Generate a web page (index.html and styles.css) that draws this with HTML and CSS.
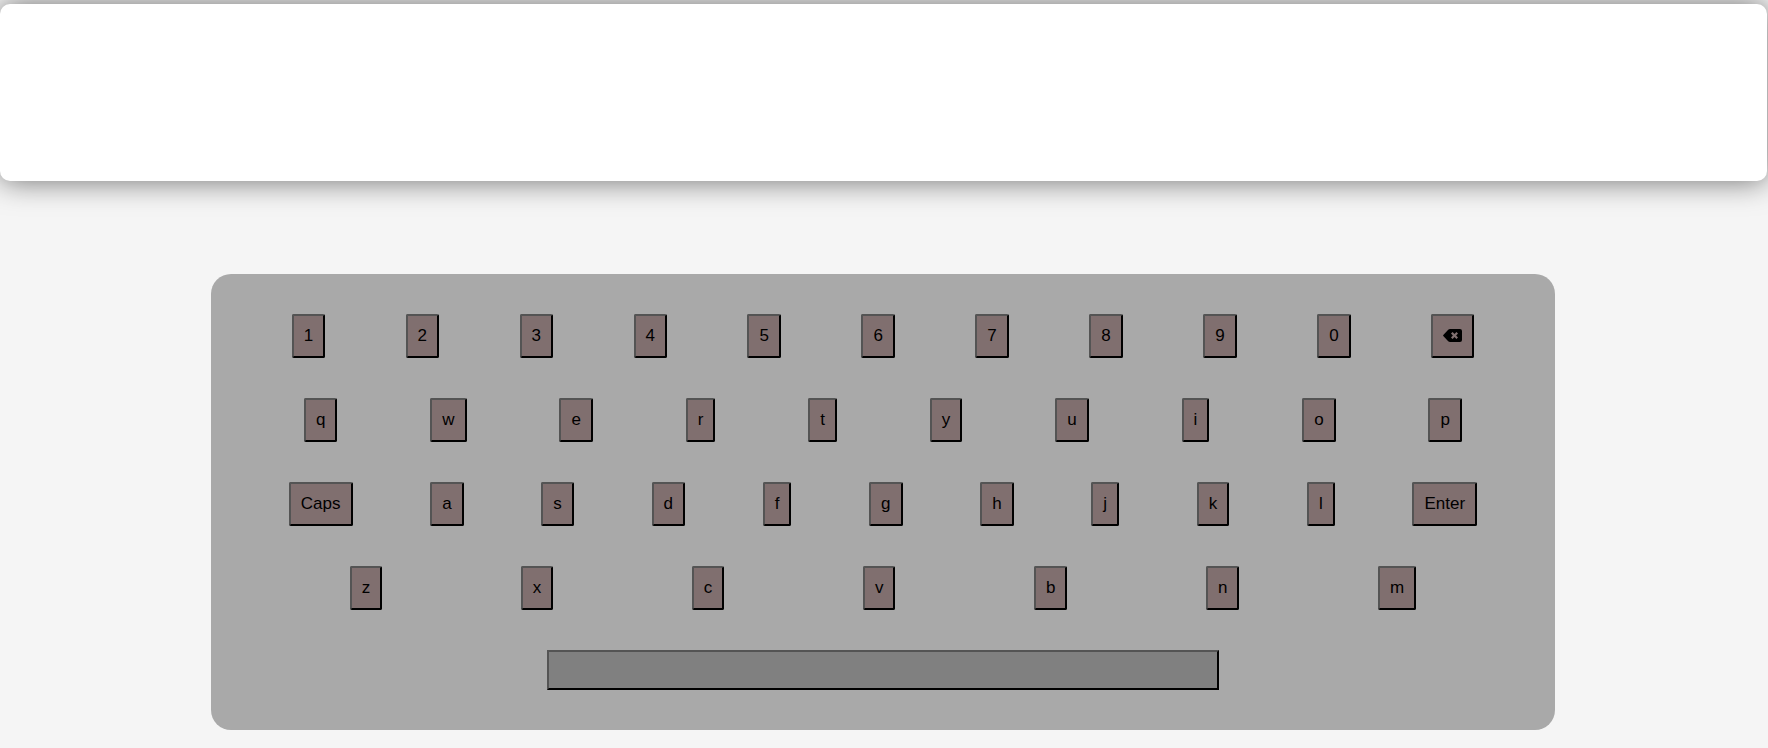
FILE: index.html
```
<!DOCTYPE html>
<html lang="en">
<head>
<meta charset="utf-8">
<title>Virtual Keyboard</title>
<link rel="stylesheet" href="styles.css">
</head>
<body>
<main class="page">
  <textarea class="display" aria-label="Typed text" readonly></textarea>
  <section class="keyboard" aria-label="Keyboard">
    <div class="row">
      <button class="key" type="button">1</button>
      <button class="key" type="button">2</button>
      <button class="key" type="button">3</button>
      <button class="key" type="button">4</button>
      <button class="key" type="button">5</button>
      <button class="key" type="button">6</button>
      <button class="key" type="button">7</button>
      <button class="key" type="button">8</button>
      <button class="key" type="button">9</button>
      <button class="key" type="button">0</button>
      <button class="key" type="button" aria-label="Backspace">
        <svg class="icon" viewBox="0 0 19 13" aria-hidden="true"><path fill-rule="evenodd" d="M.3 6 5.200.8Q6 0 7 0H17Q19 0 19 2V11Q19 13 17 13H7Q6 13 5.200 12.200L.3 7Q-.1 6.500.3 6ZM8 4.600 9.900 6.500 8 8.400 9.600 10 11.500 8.100 13.400 10 15 8.400 13.100 6.500 15 4.600 13.400 3 11.500 4.900 9.600 3Z"/></svg>
      </button>
    </div>
    <div class="row">
      <button class="key" type="button">q</button>
      <button class="key" type="button">w</button>
      <button class="key" type="button">e</button>
      <button class="key" type="button">r</button>
      <button class="key" type="button">t</button>
      <button class="key" type="button">y</button>
      <button class="key" type="button">u</button>
      <button class="key" type="button">i</button>
      <button class="key" type="button">o</button>
      <button class="key" type="button">p</button>
    </div>
    <div class="row">
      <button class="key" type="button">Caps</button>
      <button class="key" type="button">a</button>
      <button class="key" type="button">s</button>
      <button class="key" type="button">d</button>
      <button class="key" type="button">f</button>
      <button class="key" type="button">g</button>
      <button class="key" type="button">h</button>
      <button class="key" type="button">j</button>
      <button class="key" type="button">k</button>
      <button class="key" type="button">l</button>
      <button class="key" type="button">Enter</button>
    </div>
    <div class="row">
      <button class="key" type="button">z</button>
      <button class="key" type="button">x</button>
      <button class="key" type="button">c</button>
      <button class="key" type="button">v</button>
      <button class="key" type="button">b</button>
      <button class="key" type="button">n</button>
      <button class="key" type="button">m</button>
    </div>
    <div class="row">
      <button class="space" type="button" aria-label="Space"></button>
    </div>
  </section>
</main>
</body>
</html>
```
FILE: styles.css
```
* {
  box-sizing: border-box;
}

body {
  margin: 0;
  background: #f5f5f5;
  font-family: "Liberation Sans", Arial, sans-serif;
}

.page {
  display: flex;
  flex-direction: column;
  align-items: center;
  gap: 93px;
  padding: 4px 0 18px;
  overflow: hidden;
}

.display {
  display: block;
  align-self: stretch;
  height: 177px;
  margin-right: 1px;
  padding: 20px;
  border: 0;
  border-radius: 10px;
  background: #fff;
  box-shadow: 0 0 30px rgba(0, 0, 0, 0.56);
  font: inherit;
  resize: none;
  outline: none;
}

.keyboard {
  display: flex;
  flex-direction: column;
  gap: 40px;
  width: 76%;
  min-width: fit-content;
  margin-right: 2px;
  padding: 40px 0;
  border-radius: 20px;
  background: #a9a9a9;
}

.row {
  display: flex;
  justify-content: space-evenly;
}

.key {
  padding: 10px;
  border: 2px outset #000;
  border-radius: 2px;
  background: #806f6f;
  color: #000;
  font: 17px/20px "Liberation Sans", Arial, sans-serif;
}

.icon {
  display: block;
  width: 19px;
  height: 13px;
  margin-bottom: 2px;
}

.space {
  width: 50%;
  height: 40px;
  border: 2px outset #000;
  background: #808080;
}
```
